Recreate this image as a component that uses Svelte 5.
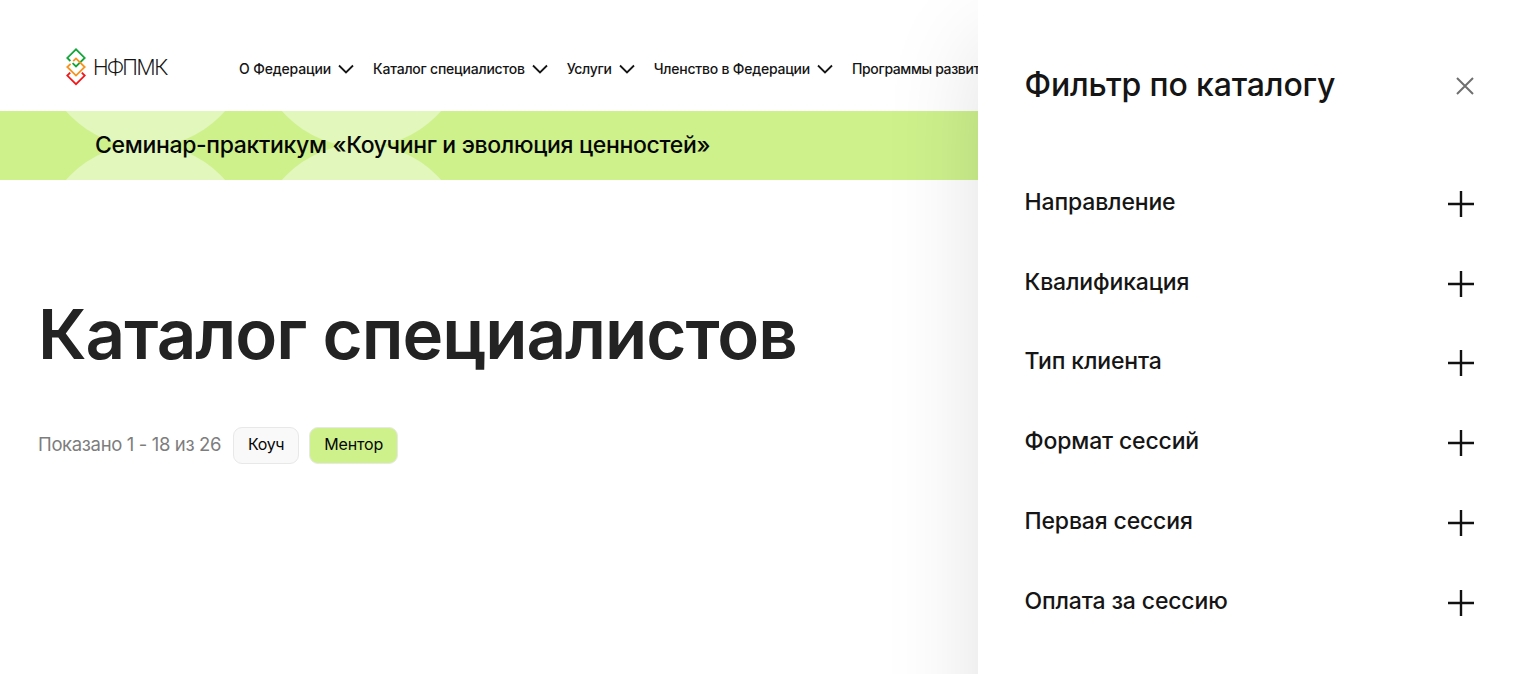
<script>
  const menu = [
    { label: 'О Федерации', key: 'about' },
    { label: 'Каталог специалистов', key: 'catalog' },
    { label: 'Услуги', key: 'services' },
    { label: 'Членство в Федерации', key: 'membership' },
    { label: 'Программы развития', key: 'programs' },
  ];

  const filters = [
    { label: 'Направление', key: 'direction' },
    { label: 'Квалификация', key: 'grade' },
    { label: 'Тип клиента', key: 'client' },
    { label: 'Формат сессий', key: 'format' },
    { label: 'Первая сессия', key: 'first' },
    { label: 'Оплата за сессию', key: 'payment' },
  ];

  const tags = ['Коуч', 'Ментор'];
  let selected = $state('Ментор');
</script>

<div class="page">
  <header>
    <div class="logo">
      <svg width="20" height="38" viewBox="0 0 20 38" fill="none" stroke-width="1.8">
        <path d="M4.4 13 1.3 9.9 10 1.3 18.7 9.9 10 18.5 6.6 15.2" stroke="#12a538" />
        <path d="M4.6 15.8 1.3 19 10 27.6 18.7 19 10 10.4 7.2 13.2" stroke="#f7931e" />
        <path d="M4.2 24.6 1.3 27.6 10 36.2 18.7 27.6 15.8 24.6" stroke="#f01818" />
      </svg>
      <span class="name">НФПМК</span>
    </div>
    <nav>
      {#each menu as item (item.key)}
        <a class={item.key} href="#{item.key}">
          <span>{item.label}</span>
          <svg width="16" height="10" viewBox="0 0 16 10" fill="none" stroke="#151515" stroke-width="1.8">
            <path d="M1 1.5 8 8.5 15 1.5" />
          </svg>
        </a>
      {/each}
    </nav>
  </header>

  <div class="banner">
    <svg class="circles" width="480" height="69" viewBox="0 0 480 69" fill="#e1f7bc">
      <circle cx="145.5" cy="-70" r="106" />
      <circle cx="361.5" cy="-70" r="106" />
      <circle cx="145.5" cy="139" r="106" />
      <circle cx="361.5" cy="139" r="106" />
    </svg>
    <span class="event">Семинар-практикум «Коучинг и эволюция ценностей»</span>
  </div>

  <main>
    <h1>Каталог специалистов</h1>
    <div class="results">
      <span class="count">Показано 1 - 18 из 26</span>
      {#each tags as tag}
        <button type="button" class="tag" class:active={selected === tag} onclick={() => (selected = tag)}>
          <span>{tag}</span>
        </button>
      {/each}
    </div>
  </main>

  <aside>
    <div class="head">
      <h2>Фильтр по каталогу</h2>
      <button type="button" class="close" aria-label="Закрыть">
        <svg width="18" height="18" viewBox="0 0 18 18" fill="none" stroke="#6f6f6f" stroke-width="2">
          <path d="M1 1 17 17M17 1 1 17" />
        </svg>
      </button>
    </div>
    <ul>
      {#each filters as filter (filter.key)}
        <li>
          <span class={filter.key}>{filter.label}</span>
          <svg width="26" height="26" viewBox="0 0 26 26" fill="none" stroke="#111" stroke-width="2.4">
            <path d="M0 13H26M13 0V26" />
          </svg>
        </li>
      {/each}
    </ul>
  </aside>
</div>

<style>
  :global(body) { background: #fff; }

  .page {
    position: relative;
    height: 674px;
    overflow: hidden;
    color: #151515;
    font-family: Inter, "Liberation Sans", sans-serif;
    font-weight: 500;
  }

  header {
    display: flex;
    align-items: center;
    height: 111px;
    box-sizing: border-box;
    padding: 23px 0 0 66px;
  }
  .logo {
    display: flex;
    align-items: center;
    gap: 7px;
    width: 173px;
    flex-shrink: 0;
  }
  .name {
    font-family: Roboto, Inter, sans-serif;
    font-size: 22px;
    font-weight: 300;
    letter-spacing: -1.3px;
  }
  nav {
    display: flex;
    gap: 19px;
    padding-top: 4px;
  }
  nav a {
    display: flex;
    align-items: center;
    gap: 7px;
    color: inherit;
    font-size: 14px;
    line-height: 20px;
    letter-spacing: -0.22px;
    text-decoration: none;
    white-space: nowrap;
  }
  nav .about { letter-spacing: -0.15px; }
  nav .services { letter-spacing: -0.3px; }
  nav .programs { letter-spacing: -0.38px; }

  .banner {
    position: relative;
    display: flex;
    align-items: center;
    height: 69px;
    padding-left: 95px;
    background: #cef18c;
  }
  .circles {
    position: absolute;
    top: 0;
    left: 0;
  }
  .event {
    position: relative;
    padding-bottom: 2px;
    color: #060606;
    font-size: 23px;
    line-height: 32px;
    letter-spacing: -0.33px;
  }

  main { padding: 114px 38px 0; }
  h1 {
    margin: 0;
    color: #232323;
    font-size: 69px;
    font-weight: 600;
    line-height: 80px;
    letter-spacing: -1px;
    white-space: nowrap;
  }
  .results {
    display: flex;
    align-items: center;
    margin-top: 53px;
  }
  .count {
    width: 195px;
    padding-bottom: 3px;
    color: #7d7d7d;
    font-size: 18.5px;
    font-weight: 400;
    letter-spacing: -0.36px;
    white-space: nowrap;
  }
  .tag {
    height: 37px;
    margin-right: 10px;
    padding: 0 14px 4px;
    border: 1px solid #e8e8e8;
    border-radius: 9px;
    background: #f9f9f9;
    color: #060606;
    font: 400 16px/24px Inter, "Liberation Sans", sans-serif;
    letter-spacing: -0.35px;
  }
  .tag.active {
    background: #cef18c;
    letter-spacing: -0.12px;
  }

  aside {
    position: absolute;
    top: 0;
    right: 0;
    width: 542px;
    height: 800px;
    box-sizing: border-box;
    padding: 62px 46px 0 46.5px;
    background: #fff;
    box-shadow: 0 40px 90px rgba(0, 0, 0, 0.12);
  }
  .head {
    display: flex;
    align-items: center;
    justify-content: space-between;
    height: 46px;
  }
  h2 {
    margin: 0;
    font-size: 32px;
    font-weight: 500;
    line-height: 46px;
    letter-spacing: -0.15px;
  }
  .close {
    display: flex;
    padding: 1px 0 0;
    border: 0;
    background: none;
  }
  ul {
    margin: 56px 0 0;
    padding: 0;
    list-style: none;
  }
  li {
    display: flex;
    align-items: center;
    justify-content: space-between;
    height: 79.8px;
    font-size: 23px;
    letter-spacing: -0.15px;
  }
  li span { padding-bottom: 4px; }
</style>
